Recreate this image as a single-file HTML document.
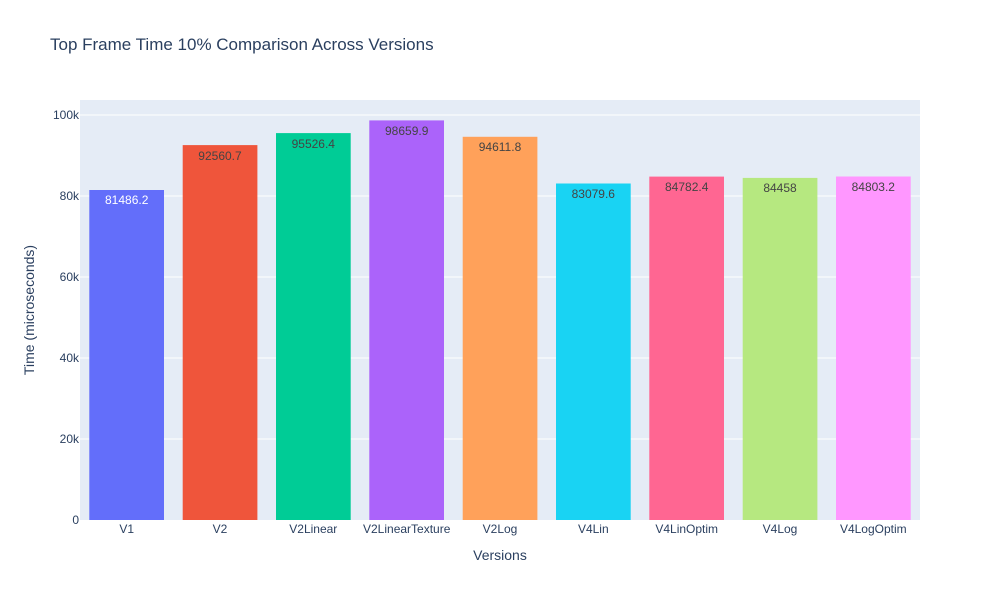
<!DOCTYPE html>
<html><head><meta charset="utf-8"><style>body{margin:0;background:#fff}svg{display:block}text{font-family:"Liberation Sans",Arial,sans-serif}</style></head><body>
<svg width="1000" height="600" xmlns="http://www.w3.org/2000/svg">
<rect width="1000" height="600" fill="#fff"/>
<rect x="80" y="100" width="840" height="420" fill="#e5ecf6"/>
<g stroke="#fff" stroke-width="1">
<line x1="80" x2="920" y1="439" y2="439"/><line x1="80" x2="920" y1="358" y2="358"/><line x1="80" x2="920" y1="277" y2="277"/><line x1="80" x2="920" y1="196" y2="196"/><line x1="80" x2="920" y1="115" y2="115"/>
</g>
<g>
<rect x="89.3" y="190" width="74.7" height="330" fill="#636efa"/>
<rect x="182.7" y="145.1" width="74.7" height="374.9" fill="#EF553B"/>
<rect x="276" y="133.1" width="74.7" height="386.9" fill="#00cc96"/>
<rect x="369.3" y="120.4" width="74.7" height="399.6" fill="#ab63fa"/>
<rect x="462.7" y="136.8" width="74.7" height="383.2" fill="#FFA15A"/>
<rect x="556" y="183.5" width="74.7" height="336.5" fill="#19d3f3"/>
<rect x="649.3" y="176.6" width="74.7" height="343.4" fill="#FF6692"/>
<rect x="742.7" y="177.9" width="74.7" height="342.1" fill="#B6E880"/>
<rect x="836" y="176.5" width="74.7" height="343.5" fill="#FF97FF"/>
</g>
<g font-size="12" text-anchor="middle" fill="#444">
<text x="126.7" y="204" fill="#fff">81486.2</text>
<text x="220" y="160">92560.7</text>
<text x="313.3" y="148">95526.4</text>
<text x="406.7" y="135">98659.9</text>
<text x="500" y="151">94611.8</text>
<text x="593.3" y="198">83079.6</text>
<text x="686.7" y="191">84782.4</text>
<text x="780" y="192">84458</text>
<text x="873.3" y="191">84803.2</text>
</g>
<g font-size="12" text-anchor="middle" fill="#2a3f5f">
<text x="126.7" y="533">V1</text><text x="220" y="533">V2</text><text x="313.3" y="533">V2Linear</text><text x="406.7" y="533">V2LinearTexture</text><text x="500" y="533">V2Log</text><text x="593.3" y="533">V4Lin</text><text x="686.7" y="533">V4LinOptim</text><text x="780" y="533">V4Log</text><text x="873.3" y="533">V4LogOptim</text>
</g>
<g font-size="12" text-anchor="end" fill="#2a3f5f">
<text x="79" y="524">0</text><text x="79" y="443">20k</text><text x="79" y="362">40k</text><text x="79" y="281">60k</text><text x="79" y="200">80k</text><text x="79" y="119">100k</text>
</g>
<text x="500" y="560" font-size="14" text-anchor="middle" fill="#2a3f5f">Versions</text>
<text transform="translate(34,310) rotate(-90)" font-size="14" text-anchor="middle" fill="#2a3f5f">Time (microseconds)</text>
<text x="50" y="50" font-size="17" fill="#2a3f5f">Top Frame Time 10% Comparison Across Versions</text>
</svg>
</body></html>
